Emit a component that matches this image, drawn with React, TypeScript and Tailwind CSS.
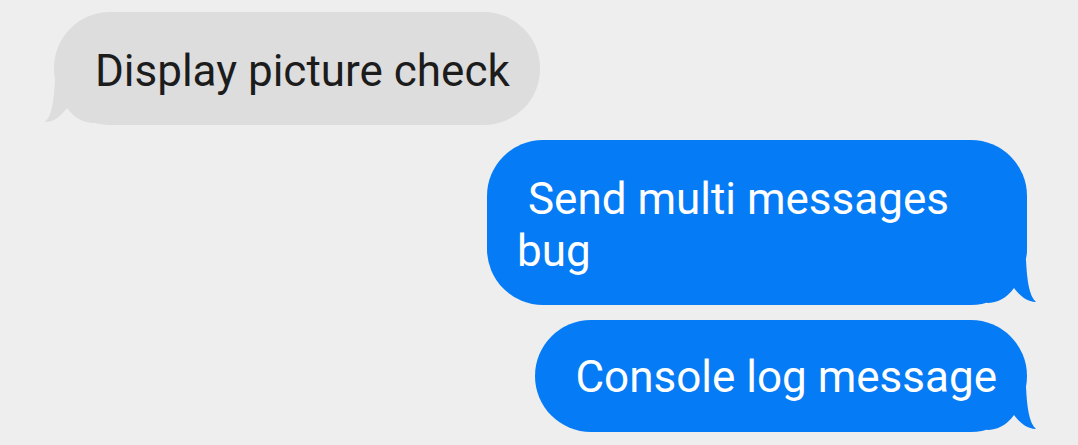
import React from "react";

function Tail({ fill, className }: { fill: string; className: string }) {
  return (
    <svg
      width="52"
      height="47"
      viewBox="0 0 52 47"
      className={className}
      aria-hidden="true"
    >
      <path
        d="M39 0 C40 20 42 36 49 42 C40 42 33 36 27 28 C20 38 10 43 0 43 L0 0 Z"
        fill={fill}
      />
    </svg>
  );
}

export default function App() {
  return (
    <div className="w-[1078px] h-[445px] bg-[#eeeeee] overflow-hidden flex flex-col gap-[15px] pt-[12px] pl-[54px] pr-[51px] font-['Roboto',sans-serif] text-[44px] leading-[52px]">
      <div className="relative self-start bg-[#dddddd] text-[#1c1c1c] rounded-[56px] px-[30px] pt-[33px] pb-[28px] whitespace-pre-wrap">
        <span className="relative z-10">{" Display picture check"}</span>
        <Tail
          fill="#dddddd"
          className="absolute left-[-12px] bottom-[-2px] -scale-x-100"
        />
      </div>
      <div className="relative self-end w-[540px] bg-[#057bf5] text-white rounded-[56px] px-[30px] pt-[33px] pb-[28px] whitespace-pre-wrap">
        <span className="relative z-10">{" Send multi messages bug"}</span>
        <Tail
          fill="#057bf5"
          className="absolute right-[-12px] bottom-[-2px]"
        />
      </div>
      <div className="relative self-end bg-[#057bf5] text-white rounded-[56px] px-[30px] pt-[31px] pb-[29px] whitespace-pre-wrap">
        <span className="relative z-10">{" Console log message"}</span>
        <Tail
          fill="#057bf5"
          className="absolute right-[-12px] bottom-[-2px]"
        />
      </div>
    </div>
  );
}
